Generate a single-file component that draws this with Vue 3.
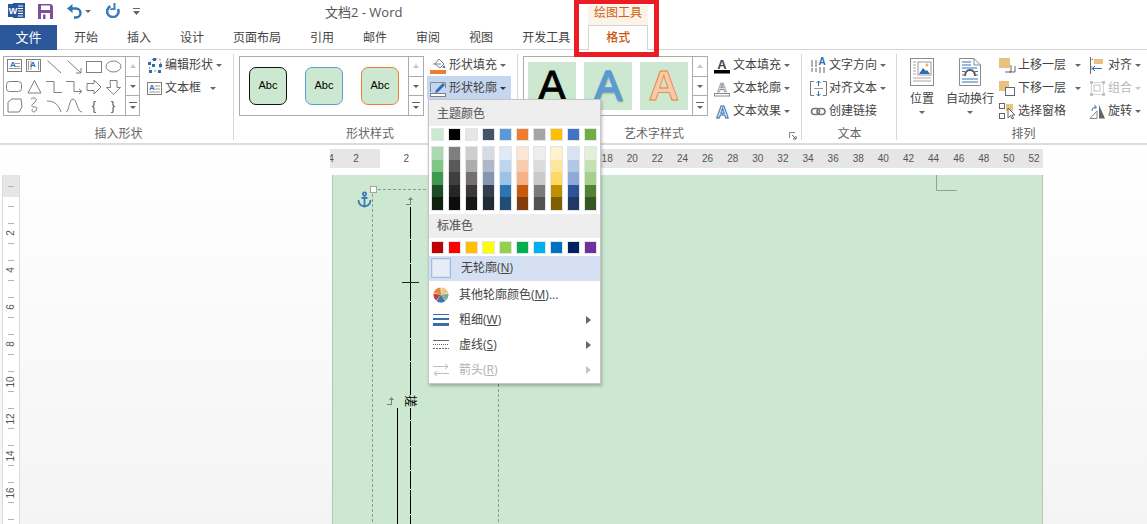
<script setup>
const tabs = ['开始', '插入', '设计', '页面布局', '引用', '邮件', '审阅', '视图', '开发工具']

const rulerNums = [4, 2, '']
for (let i = 2; i <= 52; i += 2) rulerNums.push(i)

const sideNums = ['', 2, 4, 6, 8, 10, 12, 14, 16, '']

const themeTop = ['#cde8d0', '#000000', '#e7e6e6', '#44546a', '#5b9bd5', '#ed7d31', '#a5a5a5', '#ffc000', '#4472c4', '#70ad47']
const themeShades = [
  ['#abdab2', '#80c687', '#3f9850', '#1f4c24', '#0f2110'],
  ['#7f7f7f', '#595959', '#3f3f3f', '#262626', '#0d0d0d'],
  ['#d0cece', '#aeabab', '#757070', '#3a3838', '#171616'],
  ['#d6dce4', '#adb9ca', '#8496b0', '#323f4f', '#222a35'],
  ['#deeaf6', '#bdd6ee', '#9cc2e5', '#2e74b5', '#1f4e79'],
  ['#fbe5d5', '#f7cbac', '#f4b183', '#c55a11', '#833c0b'],
  ['#ededed', '#dbdbdb', '#c9c9c9', '#7b7b7b', '#525252'],
  ['#fff2cc', '#fee599', '#ffd966', '#bf9000', '#7f6000'],
  ['#d9e2f3', '#b4c6e7', '#8eaadb', '#2f5496', '#1f3864'],
  ['#e2efd9', '#c5e0b3', '#a8d08d', '#538135', '#375623'],
]
const standard = ['#c00000', '#ff0000', '#ffc000', '#ffff00', '#92d050', '#00b050', '#00b0f0', '#0070c0', '#002060', '#7030a0']

const lineBreaks = [239, 263, 301, 338, 361, 420, 446, 470, 489, 514]
</script>

<template>
  <div class="app">
    <!-- title bar -->
    <div class="titlebar">
      <div class="qat">
        <svg class="q-word" width="17" height="17" viewBox="0 0 17 17">
          <rect x="5" y="1" width="12" height="15" fill="#2b579a" />
          <path d="M9 4h6M9 6.500h6M9 9h6M9 11.500h6M9 14h6" stroke="#fff" stroke-width="1" />
          <rect x="0" y="2" width="10" height="13" fill="#2b579a" />
          <text x="5" y="12" text-anchor="middle" font-size="9" font-weight="700" fill="#fff" font-family="Liberation Sans">W</text>
        </svg>
        <svg class="q-save" width="15" height="15" viewBox="0 0 15 15">
          <path d="M0 0h13l2 2v13H0z" fill="#7d4f9f" />
          <rect x="3" y="1.500" width="9" height="4.500" fill="#fff" />
          <rect x="3" y="9" width="9" height="6" fill="#fff" />
          <rect x="5" y="10.500" width="2.500" height="4.500" fill="#7d4f9f" />
        </svg>
        <svg class="q-undo" width="15" height="15" viewBox="0 0 15 15">
          <path d="M0 4.500 5.500 0v9z" fill="#2e75b6" />
          <path d="M4 4.500h5a4 4 0 0 1 0 9H7" fill="none" stroke="#2e75b6" stroke-width="2.400" />
        </svg>
        <span class="caret q-caret"></span>
        <svg class="q-redo" width="14" height="15" viewBox="0 0 14 15">
          <path d="M4.500 3.200A5.700 5.700 0 1 0 12 6" fill="none" stroke="#3a7dbf" stroke-width="2.600" />
          <path d="M9.500 0v7H3.500L5 5.200h2.500V0z" fill="#3a7dbf" />
        </svg>
        <svg class="q-custom" width="7" height="9" viewBox="0 0 7 9">
          <path d="M0 1.500h7" stroke="#666" />
          <path d="M0 4h7L3.500 8z" fill="#666" />
        </svg>
      </div>
      <div class="doc-title">文档2 - Word</div>
      <div class="ctx-label">绘图工具</div>
    </div>

    <!-- tabs -->
    <div class="tabs">
      <div class="tab-file">文件</div>
      <div v-for="t in tabs" :key="t" class="tab">{{ t }}</div>
      <div class="tab-format">格式</div>
    </div>

    <!-- ribbon -->
    <div class="ribbon">
      <section class="group g-insert">
        <div class="group-body">
          <div class="gallery gal-shapes">
            <svg class="shapes" width="121" height="58" viewBox="0 0 121 58">
              <g fill="none" stroke="#7f7f7f" stroke-width="1">
                <rect x="3.500" y="2.500" width="14" height="12" />
                <path d="M11 9.500h5M11 6.500h5M4.500 11.500h12" stroke="#999" />
                <rect x="22.500" y="2.500" width="14" height="12" />
                <path d="M24.500 4v9M27 4v9M34.500 4v9" stroke="#999" />
                <path d="M43.500 3.500 57 16" />
                <path d="M63.500 3.500 77 16M77 11v5h-5" />
                <rect x="82.500" y="4.500" width="15" height="11" />
                <ellipse cx="109.500" cy="9.500" rx="7.500" ry="5.500" />
                <rect x="2.500" y="24.500" width="15" height="10" rx="3" />
                <path d="M30.500 23.500 37 36H24z" />
                <path d="M42 24.500h8v11h8" />
                <path d="M62 24.500h8v10h7M75 32l3 2.500-3 2.500" />
                <path d="M83 26.500h7v-3.500l7 7-7 7v-3.500h-7z" />
                <path d="M106 23.500h7v7h3.500l-7 7-7-7h4z" />
                <path d="M4 45l4-3h9l1 8-3 5H4z" />
                <path d="M27 42c5-3 7 1 3 4s-2 4 1 4 2 4-1 5c-2 0-3-2-1-3" />
                <path d="M43 44c6 0 11 2 14 11" />
                <path d="M62 55c3 0 3-13 7-13s4 13 9 13" />
              </g>
              <text x="90" y="53" class="brace" text-anchor="middle">{</text>
              <text x="109" y="53" class="brace" text-anchor="middle">}</text>
              <text x="6" y="10" class="mini-a">A</text>
              <text x="26" y="10" class="mini-a">A</text>
            </svg>
            <div class="scroller">
              <span class="scroll-cell"><i class="caret up off"></i></span>
              <span class="scroll-cell"><i class="caret"></i></span>
              <span class="scroll-cell more"><i class="caret"></i></span>
            </div>
          </div>
          <div class="cmds">
            <div class="cmd">
              <svg class="ico" viewBox="0 0 17 17">
                <path d="M3 6 7 2h7l1 6-2 6H4z" fill="none" stroke="#7f7f7f" stroke-dasharray="2 2" />
                <path d="M2 5h3v3H2zM7 1h3v3H7zM13 7h3v3h-3zM6 7h3v3H6zM3 13h3v3H3zM12 13h3v3h-3z" fill="#2e6db4" />
              </svg>
              编辑形状<span class="caret"></span>
            </div>
            <div class="cmd">
              <svg class="ico" viewBox="0 0 17 17">
                <rect x="1.500" y="2.500" width="14" height="12" fill="#fff" stroke="#7f7f7f" />
                <path d="M9 6h5M9 9h5M3 12h11" stroke="#999" />
                <text x="3" y="10" class="mini-a">A</text>
              </svg>
              文本框<span class="caret wide"></span>
            </div>
          </div>
        </div>
        <div class="group-label">插入形状</div>
      </section>

      <section class="group g-styles">
        <div class="group-body">
          <div class="gallery gal-wide">
            <div class="abc-row">
              <div class="abc abc-black">Abc</div>
              <div class="abc abc-blue">Abc</div>
              <div class="abc abc-orange">Abc</div>
            </div>
            <div class="scroller">
              <span class="scroll-cell"><i class="caret up off"></i></span>
              <span class="scroll-cell"><i class="caret"></i></span>
              <span class="scroll-cell more"><i class="caret"></i></span>
            </div>
          </div>
          <div class="cmds c-narrow">
            <div class="cmd">
              <svg class="ico" viewBox="0 0 17 17">
                <path d="M5 7 9 2l5 5-4 4z" fill="#fff" stroke="#7f7f7f" />
                <path d="M3 7h8" stroke="#7f7f7f" />
                <path d="M14 8l1.500 3h-3z" fill="#2e75b6" />
                <rect x="0" y="13" width="16" height="4" fill="#ed7d31" />
              </svg>
              形状填充<span class="caret"></span>
            </div>
            <div class="cmd cmd-on">
              <svg class="ico" viewBox="0 0 17 17">
                <path d="M0.500 12V2.500h15V8" fill="none" stroke="#8a8a8a" />
                <path d="M6 10l7-7 2 2-7 7-3 1z" fill="#2e6db4" />
                <rect x="0.500" y="13.500" width="15" height="3" fill="#fff" stroke="#7f7f7f" />
              </svg>
              形状轮廓<span class="caret dark"></span>
            </div>
          </div>
        </div>
        <div class="group-label">形状样式</div>
      </section>

      <section class="group g-art">
        <div class="group-body">
          <div class="gallery gal-wide">
            <div class="art-row">
              <div class="art"><span class="a-black">A</span></div>
              <div class="art"><span class="a-blue">A</span></div>
              <div class="art"><span class="a-orange">A</span></div>
            </div>
            <div class="scroller">
              <span class="scroll-cell"><i class="caret up off"></i></span>
              <span class="scroll-cell"><i class="caret"></i></span>
              <span class="scroll-cell more"><i class="caret"></i></span>
            </div>
          </div>
          <div class="cmds c-narrow">
            <div class="cmd">
              <svg class="ico" viewBox="0 0 17 17">
                <text x="8" y="12" class="ico-a" fill="#444">A</text>
                <rect x="0" y="13" width="16" height="3.500" fill="#000" />
              </svg>
              文本填充<span class="caret"></span>
            </div>
            <div class="cmd">
              <svg class="ico" viewBox="0 0 17 17">
                <text x="8" y="12" class="ico-a" fill="#fff" stroke="#777" stroke-width=".7">A</text>
                <rect x="0.500" y="13.500" width="15" height="2.500" fill="#fff" stroke="#888" />
              </svg>
              文本轮廓<span class="caret"></span>
            </div>
            <div class="cmd">
              <svg class="ico" viewBox="0 0 17 17">
                <text x="8.500" y="14.500" class="ico-a big" fill="#fff" stroke="#2e6db4" stroke-width="1">A</text>
              </svg>
              文本效果<span class="caret"></span>
            </div>
          </div>
        </div>
        <div class="group-label pad-launcher">艺术字样式</div>
        <svg class="launcher" width="8" height="8" viewBox="0 0 8 8">
          <path d="M.500 6V.500H6" fill="none" stroke="#888" />
          <path d="M3 3l4 4M7 4v3H4" fill="none" stroke="#666" />
        </svg>
      </section>

      <section class="group g-text">
        <div class="group-body">
          <div class="cmds c-text">
            <div class="cmd">
              <svg class="ico" viewBox="0 0 17 17">
                <text x="12" y="8" class="mini-a wide-a">A</text>
                <path d="M2 3v12M6 3v12M10 10v6M14 10v6" stroke="#666" stroke-dasharray="7 1" />
              </svg>
              文字方向<span class="caret"></span>
            </div>
            <div class="cmd">
              <svg class="ico" viewBox="0 0 17 17">
                <path d="M4 1.500H.500v14H4M13 1.500h3.500v14H13" fill="none" stroke="#777" />
                <path d="M8.500 1v5M6.500 3l2-2 2 2M8.500 11v5M6.500 14l2 2 2-2" fill="none" stroke="#2e6db4" />
                <path d="M4 8.500h9" stroke="#999" />
              </svg>
              对齐文本<span class="caret"></span>
            </div>
            <div class="cmd">
              <svg class="ico" viewBox="0 0 17 17">
                <rect x="1.500" y="5.500" width="8" height="6" rx="3" fill="none" stroke="#777" stroke-width="1.600" />
                <rect x="7" y="5.500" width="8" height="6" rx="3" fill="none" stroke="#777" stroke-width="1.600" />
              </svg>
              创建链接
            </div>
          </div>
        </div>
        <div class="group-label">文本</div>
      </section>

      <section class="group g-arrange">
        <div class="group-body">
          <div class="big-btn b-pos">
            <svg width="24" height="28" viewBox="0 0 24 28">
              <rect x=".500" y=".500" width="23" height="27" fill="#fff" stroke="#8a8a8a" />
              <path d="M3 4h3M3 7h3M3 10h3M3 13h3M3 16h3M3 20h18M3 23h18" stroke="#a8a8a8" />
              <rect x="8" y="4" width="13" height="13" fill="#fff" stroke="#999" />
              <path d="M9 16l4-6 3 3 1-1 3 4z" fill="#2e6db4" />
              <circle cx="17" cy="7" r="1.500" fill="#e8b44c" />
            </svg>
            <span class="big-label">位置</span>
            <span class="caret"></span>
          </div>
          <div class="big-btn b-wrap">
            <svg width="22" height="28" viewBox="0 0 22 28">
              <path d="M.500.500H15L21.500 7v20.500H.500z" fill="#fff" stroke="#8a8a8a" />
              <path d="M15 .500V7h6.500" fill="none" stroke="#8a8a8a" />
              <path d="M3 4h9M3 7h9M3 10h15M3 24h16M3 21h16" stroke="#2e75b6" />
              <path d="M3 13.500h3M16 13.500h3M3 17h2M17 17h2" stroke="#2e75b6" />
              <path d="M6 18c0-8 10-8 10 0" fill="none" stroke="#555" stroke-width="2" />
            </svg>
            <span class="big-label">自动换行</span>
            <span class="caret"></span>
          </div>
          <div class="cmds c-layer">
            <div class="cmd">
              <svg class="ico" viewBox="0 0 17 17">
                <path d="M12 8v7H6" fill="none" stroke="#666" />
                <path d="M10 15h6V9" fill="none" stroke="#666" />
                <rect x="0" y="1" width="11" height="10" fill="#e8c27e" />
              </svg>
              上移一层<span class="caret wide"></span>
            </div>
            <div class="cmd">
              <svg class="ico" viewBox="0 0 17 17">
                <rect x="0" y="1" width="10" height="10" fill="#e8c27e" />
                <rect x="6.500" y="7.500" width="9" height="8" fill="#fff" stroke="#666" />
              </svg>
              下移一层<span class="caret wide"></span>
            </div>
            <div class="cmd">
              <svg class="ico" viewBox="0 0 17 17">
                <rect x=".500" y=".500" width="5" height="5" fill="#fff" stroke="#666" />
                <rect x=".500" y="10.500" width="5" height="5" fill="#fff" stroke="#666" />
                <rect x="7" y="1" width="7" height="7" fill="#e8c27e" />
                <path d="M9 5v10l2.500-2.500 1.500 3.500 1.500-.7-1.500-3.300h3z" fill="#fff" stroke="#666" />
              </svg>
              选择窗格
            </div>
          </div>
          <div class="cmds c-align">
            <div class="cmd">
              <svg class="ico" viewBox="0 0 17 17">
                <path d="M1.500 0v17" stroke="#666" />
                <rect x="5" y="2" width="9" height="5" fill="#e8c27e" />
                <path d="M3 3v-1h1M3 13V9" stroke="#999" />
                <path d="M3.500 11.500H13M6 9l-2.500 2.500L6 14" fill="none" stroke="#2e6db4" />
              </svg>
              对齐<span class="caret"></span>
            </div>
            <div class="cmd off">
              <svg class="ico" viewBox="0 0 17 17">
                <path d="M1 1h3v3H1zM13 1h3v3h-3zM1 13h3v3H1zM13 13h3v3h-3z" fill="#c2c2c2" />
                <rect x="5" y="5" width="6" height="6" fill="none" stroke="#c2c2c2" />
                <path d="M4 2.500h9M4 14.500h9M2.500 4v9M14.500 4v9" stroke="#d5d5d5" />
              </svg>
              组合<span class="caret light"></span>
            </div>
            <div class="cmd">
              <svg class="ico" viewBox="0 0 17 17">
                <path d="M1 15.500 8 8v7.500z" fill="#fff" stroke="#8a8a8a" />
                <path d="M10 2v13.500h6z" fill="#666" />
                <path d="M3 8c0-3 2-4 4-4M5.500 2.500 7.500 4 5.500 6" fill="none" stroke="#2e6db4" />
              </svg>
              旋转<span class="caret"></span>
            </div>
          </div>
        </div>
        <div class="group-label">排列</div>
      </section>
    </div>

    <!-- document area -->
    <div class="workspace">
      <div class="v-ruler">
        <div v-for="(n, i) in sideNums" :key="i" class="v-cell">
          <i class="tick"></i>
          <span class="v-num">{{ n }}</span>
          <i class="tick"></i>
        </div>
      </div>
      <div class="doc">
        <div class="h-ruler">
          <div class="h-white"></div>
          <span v-for="(n, i) in rulerNums" :key="i" class="h-num">{{ n }}</span>
        </div>
        <div class="page">
          <svg class="canvas" width="711" height="349" viewBox="332 175 711 349">
            <path d="M372.500 189V524M373 189.500H499M498.500 189V524" fill="none" stroke="#8f9a90" stroke-dasharray="3 2" />
            <rect x="370.500" y="186.500" width="6" height="6" fill="#fff" stroke="#a3a3a3" />
            <g fill="none" stroke="#3f7ab5" stroke-width="1.800">
              <circle cx="364.500" cy="194" r="1.600" />
              <path d="M364.500 196v10.500M361.500 198h6M358.500 200c0 4 3 6 6 6.500 3-.5 6-2.500 6-6.500" />
            </g>
            <rect x="410" y="207" width="1" height="317" fill="#000" />
            <rect v-for="y in lineBreaks" :key="y" x="410" :y="y" width="1" height="1" fill="#fff" />
            <rect x="404" y="395" width="13" height="13" fill="#cde8d0" />
            <rect x="397" y="408" width="1" height="116" fill="#000" />
            <path d="M402 282.500h17" stroke="#222" />
            <g fill="#7f7f7f">
              <path d="M406 204h4v-4h-2l2.500-3 2.500 3h-2v5h-5zM387 404h4v-4h-2l2.500-3 2.500 3h-2v5h-5z" />
            </g>
            <path d="M936.500 175v15.500H957" fill="none" stroke="#8aa68d" />
          </svg>
          <span class="garble">搓</span>
        </div>
      </div>
    </div>

    <!-- 形状轮廓 dropdown -->
    <div class="menu">
      <div class="menu-head">主题颜色</div>
      <div class="swatches">
        <i v-for="c in themeTop" :key="c" class="sw" :style="{ background: c }"></i>
      </div>
      <div class="shades">
        <div v-for="(col, i) in themeShades" :key="i" class="shade-col">
          <i v-for="c in col" :key="c" :style="{ background: c }"></i>
        </div>
      </div>
      <div class="menu-head head2">标准色</div>
      <div class="swatches std">
        <i v-for="c in standard" :key="c" class="sw" :style="{ background: c }"></i>
      </div>
      <div class="item active">
        <span class="no-line"></span>
        <span class="item-text">无轮廓(<u>N</u>)</span>
      </div>
      <div class="item first-after">
        <svg class="item-ico" width="16" height="16" viewBox="0 0 16 16">
          <path d="M8 8 7.500 .500A7.500 7.500 0 0 0 .800 5.800z" fill="#e08a3c" />
          <path d="M8 8 8.500 .500A7.500 7.500 0 0 1 15.200 5.800z" fill="#e8c98a" />
          <path d="M8 8l7.300-1.500A7.500 7.500 0 0 1 13 13.500z" fill="#7fa893" />
          <path d="M8 8l4.500 6A7.500 7.500 0 0 1 3.500 14z" fill="#3f74b8" />
          <path d="M8 8 3 13.500A7.500 7.500 0 0 1 .600 6.500z" fill="#c0403a" />
        </svg>
        <span class="item-text">其他轮廓颜色(<u>M</u>)...</span>
      </div>
      <div class="item">
        <svg class="item-ico" width="16" height="16" viewBox="0 0 16 16">
          <path d="M0 2.500h16" stroke="#3a6ea8" />
          <path d="M0 7h16" stroke="#3a6ea8" stroke-width="2" />
          <path d="M0 12.500h16" stroke="#3a6ea8" stroke-width="3" />
        </svg>
        <span class="item-text">粗细(<u>W</u>)</span>
        <i class="sub"></i>
      </div>
      <div class="item">
        <svg class="item-ico" width="16" height="16" viewBox="0 0 16 16">
          <path d="M0 3.500h16" stroke="#666" />
          <path d="M0 7.500h16" stroke="#666" stroke-dasharray="1 1" />
          <path d="M0 11.500h16" stroke="#666" stroke-dasharray="2 1" />
        </svg>
        <span class="item-text">虚线(<u>S</u>)</span>
        <i class="sub"></i>
      </div>
      <div class="item dim">
        <svg class="item-ico" width="16" height="16" viewBox="0 0 16 16">
          <path d="M0 4.500h15M12 2l3 2.500L12 7" fill="none" stroke="#bdbdbd" />
          <path d="M16 11.500H1M4 9l-3 2.500L4 14" fill="none" stroke="#bdbdbd" />
        </svg>
        <span class="item-text">箭头(<u>R</u>)</span>
        <i class="sub"></i>
      </div>
    </div>

    <!-- red annotation box -->
    <div class="mark"></div>
  </div>
</template>

<style scoped>
.app {
  position: relative;
  width: 1147px;
  height: 524px;
  overflow: hidden;
  background: #fff;
  display: flex;
  flex-direction: column;
  color: #444;
  font: 12px/1.2 "Open Sans", "Noto Sans CJK SC", sans-serif;
}

/* title bar */
.titlebar {
  display: flex;
  height: 25px;
  flex: none;
}
.qat {
  width: 325px;
  flex: none;
  display: flex;
  align-items: flex-start;
  padding-left: 8px;
  box-sizing: border-box;
}
.q-word { margin-top: 2px; }
.q-save { margin: 4px 0 0 13px; }
.q-undo { margin: 4px 0 0 14px; }
.q-caret { margin: 10px 0 0 5px; }
.q-redo { margin: 3px 0 0 15px; }
.q-custom { margin: 7px 0 0 13px; }
.doc-title {
  width: 263px;
  flex: none;
  font-size: 13px;
  line-height: 24px;
  color: #555;
}
.ctx-label {
  width: 60px;
  margin-top: 5px;
  height: 20px;
  line-height: 15px;
  text-align: center;
  background: #fdf4e9;
  color: #d0600f;
}

/* tabs */
.tabs {
  display: flex;
  height: 25px;
  flex: none;
  box-sizing: border-box;
  border-bottom: 1px solid #d4d4d4;
  line-height: 25px;
}
.tab-file {
  width: 57px;
  height: 25px;
  background: #2b579a;
  color: #fff;
  text-align: center;
  font-size: 13px;
}
.tab {
  padding: 0 14.500px;
  color: #444;
}
.tab-file + .tab { margin-left: 2.500px; }
.tab-format {
  width: 60px;
  height: 25px;
  margin-left: 3.500px;
  box-sizing: border-box;
  border: 1px solid #d4d4d4;
  border-bottom: 0;
  background: #fff;
  color: #c8590f;
  text-align: center;
  font-weight: 500;
  line-height: 24px;
}

/* ribbon */
.ribbon {
  display: flex;
  height: 95px;
  flex: none;
  box-sizing: border-box;
  border-bottom: 2px solid #dcdcdc;
}
.group {
  position: relative;
  flex: none;
  box-sizing: border-box;
  padding-top: 3px;
}
.group::after {
  content: "";
  position: absolute;
  right: 0;
  top: 4px;
  height: 86px;
  width: 1px;
  background: #d8d8d8;
}
.g-insert { width: 234px; padding-left: 3px; }
.g-styles { width: 284px; padding-left: 5px; }
.g-art { width: 284px; padding-left: 5px; }
.g-text { width: 95px; }
.g-arrange { width: 250px; padding-left: 3px; }
.g-arrange::after { display: none; }
.group-body {
  display: flex;
  height: 73px;
}
.group-label {
  height: 16px;
  line-height: 16px;
  text-align: center;
  color: #666;
}
.g-styles .group-label,
.pad-launcher { padding-right: 17px; }
.launcher {
  position: absolute;
  right: 5px;
  bottom: 3px;
}

/* galleries */
.gallery {
  display: flex;
  height: 60px;
  margin-top: 3px;
  flex: none;
  box-sizing: border-box;
  border: 1px solid #ababab;
  background: #fff;
}
.gal-shapes { width: 137px; }
.gal-wide { width: 185px; }
.shapes { flex: none; }
.brace {
  font: 13px "Liberation Sans", sans-serif;
  fill: #555;
}
.mini-a {
  font: 700 8px "Liberation Sans", sans-serif;
  fill: #2e6db4;
}
.wide-a { font-size: 10px; text-anchor: middle; }
.ico-a {
  font: 700 13px "Liberation Sans", sans-serif;
  text-anchor: middle;
}
.ico-a.big { font-size: 17px; }
.scroller {
  width: 14px;
  margin-left: auto;
  flex: none;
  display: flex;
  flex-direction: column;
  border-left: 1px solid #ababab;
}
.scroll-cell {
  flex: 1;
  display: flex;
  align-items: center;
  justify-content: center;
  position: relative;
  border-bottom: 1px solid #ababab;
}
.scroll-cell:last-child { border-bottom: 0; }
.scroll-cell.more::before {
  content: "";
  position: absolute;
  left: 3px;
  right: 3px;
  top: 6px;
  height: 1px;
  background: #666;
}
.scroll-cell.more .caret { margin-top: 4px; }

.caret {
  display: inline-block;
  flex: none;
  width: 0;
  height: 0;
  margin-left: 3px;
  border-left: 3px solid transparent;
  border-right: 3px solid transparent;
  border-top: 3px solid #666;
}
.scroll-cell .caret { margin-left: 0; }
.caret.up {
  border-top: 0;
  border-bottom: 4px solid #666;
}
.caret.off { border-bottom-color: #c8c8c8; }
.caret.wide { margin-left: 9px; }
.caret.dark { border-top-color: #333; }
.caret.light { border-top-color: #c8c8c8; }

.abc-row {
  display: flex;
  gap: 18px;
  padding: 10px 0 0 9px;
}
.abc {
  width: 38px;
  height: 38px;
  box-sizing: border-box;
  border-radius: 7px;
  background: #cde8d0;
  text-align: center;
  color: #000;
  font: 11px/35px "Liberation Sans", sans-serif;
}
.abc-black { border: 1.500px solid #111; }
.abc-blue { border: 1.500px solid #5b9bd5; }
.abc-orange { border: 1.500px solid #ed7d31; }

.art-row {
  display: flex;
  gap: 8px;
  padding: 5px 0 0 4px;
}
.art {
  width: 48px;
  height: 48px;
  background: #cde8d0;
  text-align: center;
  font: 42px/48px "Liberation Sans", sans-serif;
  overflow: hidden;
}
.a-black {
  color: #000;
  -webkit-text-stroke: 1px #000;
}
.a-blue {
  color: #5b9bd5;
  -webkit-text-stroke: 1.500px #5b9bd5;
  text-shadow: 1px 2px 2px rgba(70, 90, 90, 0.6);
}
.a-orange {
  color: #f8cbad;
  font-weight: 700;
  -webkit-text-stroke: 0.800px #ed7d31;
}

/* command columns */
.cmds {
  display: flex;
  flex-direction: column;
  margin-left: 3px;
  flex: none;
}
.c-narrow { width: 84px; }
.c-text { margin-left: 5px; }
.c-layer { width: 90px; margin-left: 0; }
.c-align { margin-left: 0; }
.cmd {
  display: flex;
  align-items: center;
  height: 23px;
  box-sizing: border-box;
  padding: 1px 0 0 3px;
  white-space: nowrap;
}
.cmd-on {
  background: #c5d7f0;
}
.cmd.off { color: #b8b8b8; }
.ico {
  width: 17px;
  height: 17px;
  flex: none;
  margin-right: 2px;
}
.big-btn {
  display: flex;
  flex-direction: column;
  align-items: center;
  flex: none;
  padding-top: 5px;
}
.b-pos { width: 44px; }
.b-wrap { width: 52px; }
.big-label {
  margin-top: 4px;
  line-height: 17px;
  white-space: nowrap;
}
.big-btn .caret {
  margin: 4px 0 0;
}

/* workspace */
.workspace {
  flex: 1;
  min-height: 0;
  display: flex;
  background: linear-gradient(#fff, #f4f4f4);
}
.v-ruler {
  width: 18px;
  margin: 30px 0 0 2px;
  flex: none;
  box-sizing: border-box;
  border-left: 1px solid #dcdcdc;
  border-right: 1px solid #dcdcdc;
  background: linear-gradient(#e6e6e6 22px, #fff 22px);
  padding-top: 2.500px;
  overflow: hidden;
}
.v-cell {
  height: 37.100px;
  display: flex;
  flex-direction: column;
  align-items: center;
  justify-content: space-between;
  padding: 8px 0;
  box-sizing: border-box;
}
.tick {
  width: 6px;
  height: 1px;
  background: #b5b5b5;
}
.v-num {
  transform: rotate(-90deg);
  font: 10px/10px "Liberation Sans", sans-serif;
  color: #555;
  height: 10px;
}
.doc {
  margin-left: 310px;
  width: 713px;
  flex: none;
  display: flex;
  flex-direction: column;
}
.h-ruler {
  position: relative;
  display: flex;
  height: 19px;
  margin-top: 4px;
  flex: none;
  background: #e6e6e6;
  overflow: hidden;
}
.h-white {
  position: absolute;
  left: 50px;
  width: 210px;
  top: 0;
  bottom: 0;
  background: #fff;
}
.h-num {
  position: relative;
  flex: none;
  width: 25.120px;
  text-align: center;
  font: 10px/19px "Liberation Sans", sans-serif;
  color: #555;
}
.h-num:first-of-type { margin-left: -11.600px; }
.page {
  position: relative;
  flex: 1;
  margin: 7px 0 0 2px;
  background: #cde8d0;
  overflow: hidden;
}
.page::before {
  content: "";
  position: absolute;
  inset: 0;
  border-left: 1px solid #b8c4ba;
  border-right: 1px solid #b8c4ba;
}
.canvas {
  position: absolute;
  left: 0;
  top: 0;
}
.garble {
  position: absolute;
  left: 72px;
  top: 220px;
  font-size: 12px;
  line-height: 12px;
  color: #000;
  transform: rotate(90deg);
}

/* dropdown */
.menu {
  position: absolute;
  left: 428px;
  top: 99px;
  width: 173px;
  height: 285px;
  box-sizing: border-box;
  background: #fff;
  border: 1px solid #c6c6c6;
  box-shadow: 1px 2px 3px rgba(0, 0, 0, 0.25);
  color: #444;
  display: flex;
  flex-direction: column;
}
.menu-head {
  height: 26px;
  flex: none;
  line-height: 27px;
  padding-left: 8px;
  background: #eeeeee;
  color: #666;
  font-weight: 500;
}
.swatches {
  display: flex;
  gap: 4px;
  padding: 2px 0 0 2px;
  flex: none;
}
.sw {
  width: 13px;
  height: 13px;
  box-sizing: border-box;
  border: 1px solid #e2e4e6;
}
.shades {
  display: flex;
  gap: 4px;
  padding: 5px 0 0 2px;
  flex: none;
}
.shade-col {
  width: 13px;
  box-sizing: border-box;
  border: 1px solid #e2e4e6;
  display: flex;
  flex-direction: column;
}
.shade-col i {
  height: 12.600px;
}
.head2 { margin-top: 3px; height: 24px; line-height: 24px; }
.std { padding-top: 3px; height: 16px; box-sizing: border-box; }
.item {
  height: 25px;
  flex: none;
  display: flex;
  align-items: center;
  position: relative;
  padding-left: 4px;
}
.item.active { background: #d5e1f2; margin-top: 2px; }
.item.first-after { margin-top: 2px; }
.item.dim { color: #b0b0b0; }
.item-ico { flex: none; }
.item-text {
  margin-left: 10px;
  white-space: nowrap;
}
.no-line {
  width: 20px;
  height: 20px;
  margin-left: -2px;
  flex: none;
  box-sizing: border-box;
  border: 1px solid #9dbde6;
  background: #e7edf7;
  box-shadow: inset 0 0 0 1px #d8dee8;
}
.sub {
  position: absolute;
  right: 9px;
  top: 8px;
  width: 0;
  height: 0;
  border-top: 4px solid transparent;
  border-bottom: 4px solid transparent;
  border-left: 5px solid #666;
}
.item.dim .sub { border-left-color: #c4c4c4; }

/* red annotation */
.mark {
  position: absolute;
  left: 574px;
  top: -1px;
  width: 85px;
  height: 58px;
  box-sizing: border-box;
  border: 5px solid #ed1c24;
  pointer-events: none;
}
</style>
